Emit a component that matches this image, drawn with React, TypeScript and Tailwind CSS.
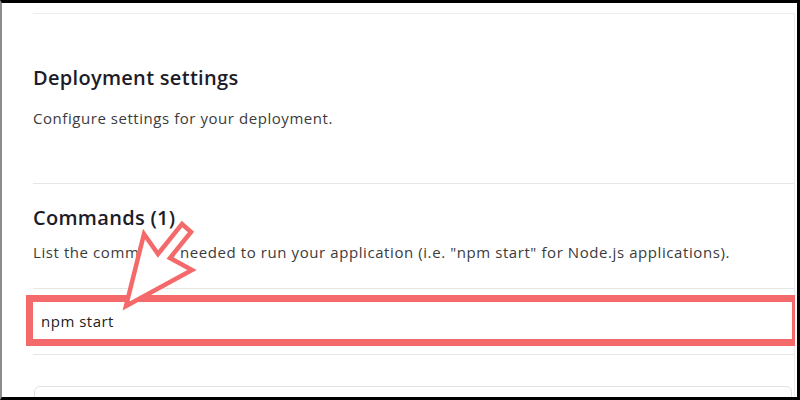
export default function App() {
  return (
    <div
      className="relative w-[800px] h-[400px] overflow-hidden bg-white border-t-[3px] border-t-black border-l-2 border-l-[#8c8c8c] border-r-[3px] border-r-black border-b-[3px] border-b-black"
      style={{ fontFamily: "'Open Sans', 'Noto Sans', sans-serif" }}
    >
      <div className="ml-[31px] mr-[2px] mt-[10px] border-t border-r border-[#ededed]">
        <section className="pt-[50px] pb-[54px] border-b border-[#e6e6e6]">
          <h2 className="text-[20px] leading-[28px] font-semibold tracking-[0.3px] text-[#1c1c28]">
            Deployment settings
          </h2>
          <p className="mt-[15px] text-[15px] leading-[22px] tracking-[0.55px] text-[#3b3b3b]">
            Configure settings for your deployment.
          </p>
        </section>

        <section className="pt-[20px]">
          <h2 className="text-[20px] leading-[28px] font-semibold tracking-[0.3px] text-[#1c1c28]">
            Commands (1)
          </h2>
          <p className="mt-[9px] text-[15px] leading-[22px] tracking-[0.58px] text-[#3b3b3b]">
            List the commands needed to run your application (i.e. "npm start" for Node.js applications).
          </p>
          <div className="mt-[25px] border-t border-b border-[#e6e6e6] h-[67px] flex items-center pl-[8px]">
            <span className="text-[15px] tracking-[0.5px] text-[#222]">npm start</span>
          </div>
          <div className="mt-[31px] mr-[2px] ml-[1px] h-[20px] rounded-t-md border border-[#e3e3e3]" />
        </section>
      </div>

      {/* callout box around the command field */}
      <div className="absolute left-[24px] top-[292px] w-[769px] h-[51px] border-[7px] border-r-[3px] border-[#f46a6a]" />

      {/* callout arrow */}
      <svg
        className="absolute left-0 top-0 pointer-events-none"
        width="795"
        height="394"
        viewBox="2 3 795 394"
      >
        <path
          d="M126 306 L144 234 L158 254 L182 224 L191 232 L170 258 L192 270 Z"
          fill="white"
          stroke="#f46a6a"
          strokeWidth="4.5"
          strokeLinejoin="miter"
        />
      </svg>
    </div>
  );
}
